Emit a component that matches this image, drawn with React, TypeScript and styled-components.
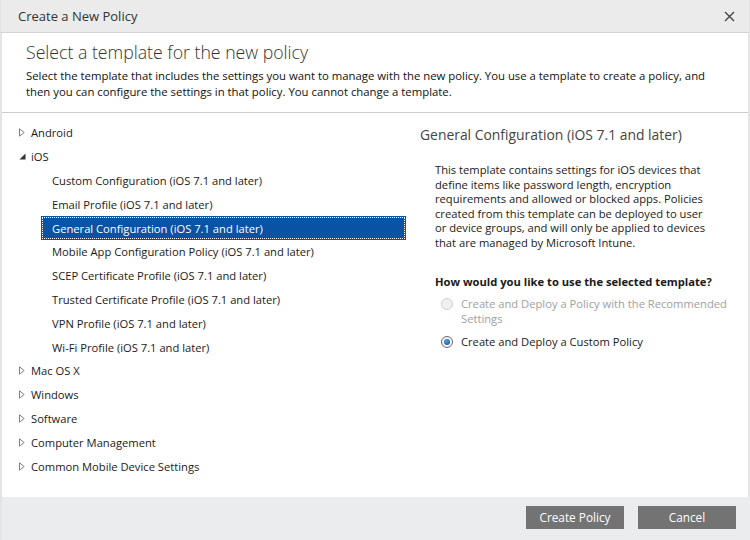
import React from "react";
import styled, { createGlobalStyle } from "styled-components";

const Global = createGlobalStyle`
  html, body { margin: 0; padding: 0; background: #ffffff; }
  body { font-family: "Open Sans", "Noto Sans", sans-serif; color: #222; }
  * { box-sizing: border-box; }
`;

const Window = styled.div`
  width: 750px;
  height: 540px;
  display: flex;
  flex-direction: column;
  background: #fff;
`;

const TitleBar = styled.div`
  height: 33px;
  flex: none;
  display: flex;
  align-items: center;
  justify-content: space-between;
  padding: 0 14px 0 17px;
  background: #ebebeb;
  border-bottom: 1px solid #d4d4d4;
  border-left: 1px solid #e4e4e4;
  border-right: 1px solid #e4e4e4;
`;

const TitleText = styled.div`
  font-size: 13px;
  color: #333;
  padding-bottom: 1px;
`;

const CloseBtn = styled.div`
  width: 12px;
  height: 12px;
  display: flex;
  align-items: center;
  justify-content: center;
`;

const Body = styled.div`
  flex: 1;
  display: flex;
  flex-direction: column;
  border-left: 2px solid #e4e4e4;
  border-right: 2px solid #e4e4e4;
  min-height: 0;
`;

const Header = styled.div`
  padding: 7px 0 12px 24px;
  border-bottom: 1px solid #cccccc;
`;

const Heading = styled.div`
  font-size: 17.7px;
  font-weight: 300;
  line-height: 24px;
  color: #333;
  margin-bottom: 4px;
`;

const Intro = styled.div`
  font-size: 11.35px;
  line-height: 16px;
  color: #111;
`;

const Content = styled.div`
  flex: 1;
  display: flex;
  min-height: 0;
`;

const TreePane = styled.div`
  width: 404px;
  padding: 8px 0 0 15px;
`;

const Row = styled.div<{ $child?: boolean; $selected?: boolean }>`
  height: 23.8px;
  display: flex;
  align-items: center;
  font-size: 11.2px;
  color: ${(p) => (p.$selected ? "#fff" : "#1a1a1a")};
  margin-left: ${(p) => (p.$child ? "24px" : "0")};
  padding-left: ${(p) => (p.$child ? "11px" : "0")};
  background: ${(p) => (p.$selected ? "#0a52a3" : "transparent")};
  outline: ${(p) => (p.$selected ? "1px dotted #ffffff" : "none")};
  outline-offset: -2px;
`;

const Arrow = styled.span`
  width: 14px;
  flex: none;
  display: flex;
  align-items: center;
  padding-left: 2px;
`;

const DetailPane = styled.div`
  flex: 1;
  padding: 12px 20px 0 14px;
`;

const DetailTitle = styled.div`
  font-size: 13.9px;
  color: #444;
  line-height: 20px;
  margin-bottom: 18px;
`;

const DetailText = styled.div`
  font-size: 11.2px;
  line-height: 14.6px;
  color: #1a1a1a;
  padding-left: 15px;
  margin-bottom: 23px;
`;

const Question = styled.div`
  font-size: 11.2px;
  font-weight: 700;
  color: #1a1a1a;
  padding-left: 15px;
  line-height: 16px;
  margin-bottom: 6px;
`;

const Option = styled.div<{ $disabled?: boolean }>`
  display: flex;
  align-items: flex-start;
  padding-left: 21px;
  font-size: 11.2px;
  line-height: 15px;
  color: ${(p) => (p.$disabled ? "#a0a0a0" : "#1a1a1a")};
  margin-bottom: 8px;
`;

const Radio = styled.span<{ $checked?: boolean; $disabled?: boolean }>`
  flex: none;
  width: 12px;
  height: 12px;
  margin-top: 2px;
  margin-right: 8px;
  border-radius: 50%;
  border: 1px solid ${(p) => (p.$disabled ? "#d0d0d0" : "#6a6a6a")};
  background: ${(p) => (p.$disabled ? "#f0f0f0" : "#f4f4f4")};
  display: flex;
  align-items: center;
  justify-content: center;
  &::after {
    content: "";
    display: ${(p) => (p.$checked ? "block" : "none")};
    width: 6px;
    height: 6px;
    border-radius: 50%;
    background: radial-gradient(circle at 40% 35%, #4aa0e6, #0c4e96);
  }
`;

const Footer = styled.div`
  height: 43px;
  flex: none;
  background: #ebecee;
  display: flex;
  align-items: flex-start;
  justify-content: flex-end;
  gap: 14px;
  padding: 9px 14px 0 0;
  border-left: 2px solid #e4e4e4;
`;

const Button = styled.button`
  width: 98px;
  height: 23px;
  border: none;
  background: #737373;
  color: #fff;
  font-family: "Open Sans", "Noto Sans", sans-serif;
  font-size: 11.8px;
  padding: 0 0 1px;
  cursor: pointer;
`;

const Collapsed = () => (
  <svg width="6" height="9" viewBox="0 0 6 9">
    <path d="M0.5 0.8 L5.2 4.5 L0.5 8.2 Z" fill="none" stroke="#808080" strokeWidth="1" />
  </svg>
);

const Expanded = () => (
  <svg width="7" height="7" viewBox="0 0 7 7">
    <path d="M6.5 0.5 L6.5 6.5 L0.5 6.5 Z" fill="#333" />
  </svg>
);

const iosChildren = [
  "Custom Configuration (iOS 7.1 and later)",
  "Email Profile (iOS 7.1 and later)",
  "General Configuration (iOS 7.1 and later)",
  "Mobile App Configuration Policy (iOS 7.1 and later)",
  "SCEP Certificate Profile (iOS 7.1 and later)",
  "Trusted Certificate Profile (iOS 7.1 and later)",
  "VPN Profile (iOS 7.1 and later)",
  "Wi-Fi Profile (iOS 7.1 and later)",
];

const after = ["Mac OS X", "Windows", "Software", "Computer Management", "Common Mobile Device Settings"];

export default function App() {
  return (
    <>
      <Global />
      <Window>
        <TitleBar>
          <TitleText>Create a New Policy</TitleText>
          <CloseBtn>
            <svg width="11" height="11" viewBox="0 0 11 11">
              <path d="M1 1 L10 10 M10 1 L1 10" stroke="#444" strokeWidth="1.4" />
            </svg>
          </CloseBtn>
        </TitleBar>
        <Body>
          <Header>
            <Heading>Select a template for the new policy</Heading>
            <Intro>
              Select the template that includes the settings you want to manage with the new policy. You use a template to create a policy, and
              <br />
              then you can configure the settings in that policy. You cannot change a template.
            </Intro>
          </Header>
          <Content>
            <TreePane>
              <Row>
                <Arrow><Collapsed /></Arrow>Android
              </Row>
              <Row>
                <Arrow><Expanded /></Arrow>iOS
              </Row>
              {iosChildren.map((c) => (
                <Row key={c} $child $selected={c.startsWith("General")}>
                  {c}
                </Row>
              ))}
              {after.map((a) => (
                <Row key={a}>
                  <Arrow><Collapsed /></Arrow>{a}
                </Row>
              ))}
            </TreePane>
            <DetailPane>
              <DetailTitle>General Configuration (iOS 7.1 and later)</DetailTitle>
              <DetailText>
                This template contains settings for iOS devices that
                <br />
                define items like password length, encryption
                <br />
                requirements and allowed or blocked apps. Policies
                <br />
                created from this template can be deployed to user
                <br />
                or device groups, and will only be applied to devices
                <br />
                that are managed by Microsoft Intune.
              </DetailText>
              <Question>How would you like to use the selected template?</Question>
              <Option $disabled>
                <Radio $disabled />
                <span>
                  Create and Deploy a Policy with the Recommended
                  <br />
                  Settings
                </span>
              </Option>
              <Option>
                <Radio $checked />
                <span>Create and Deploy a Custom Policy</span>
              </Option>
            </DetailPane>
          </Content>
        </Body>
        <Footer>
          <Button>Create Policy</Button>
          <Button>Cancel</Button>
        </Footer>
      </Window>
    </>
  );
}
